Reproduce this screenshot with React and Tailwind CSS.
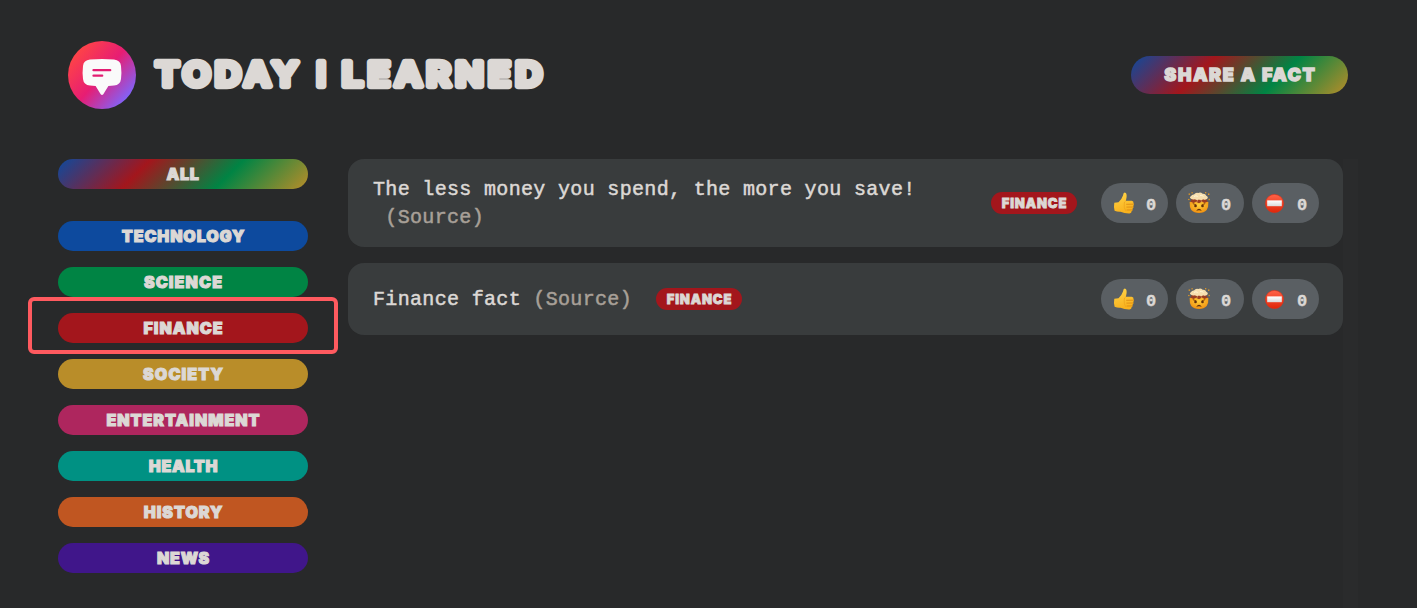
import React from "react";

const DISPLAY =
  "font-['Inter'] font-black uppercase whitespace-nowrap text-[#dcd8d5] [-webkit-text-stroke-color:#dcd8d5]";

const categories = [
  { name: "technology", color: "bg-[#0d4a9e]", spacing: "tracking-[0.9px]" },
  { name: "science", color: "bg-[#008444]", spacing: "tracking-[1.15px]" },
  { name: "finance", color: "bg-[#a3161c]", spacing: "tracking-[1px]" },
  { name: "society", color: "bg-[#b98d29]", spacing: "tracking-[1.15px]" },
  { name: "entertainment", color: "bg-[#ae265e]", spacing: "tracking-[1px]" },
  { name: "health", color: "bg-[#009183]", spacing: "tracking-[0.7px]" },
  { name: "history", color: "bg-[#c05621]", spacing: "tracking-[1px]" },
  { name: "news", color: "bg-[#40168a]", spacing: "tracking-[0.8px]" },
];

const GRADIENT = "bg-[linear-gradient(135deg,#0d4a9e,#a3161c,#008444,#b98d29)]";

function Logo() {
  return (
    <svg width="68" height="68" viewBox="0 0 68 68" className="shrink-0">
      <defs>
        <linearGradient id="logo" x1="0.1" y1="0.15" x2="0.9" y2="0.85">
          <stop offset="0" stopColor="#ff4545" />
          <stop offset="0.5" stopColor="#e71d73" />
          <stop offset="1" stopColor="#7d66ff" />
        </linearGradient>
      </defs>
      <circle cx="34" cy="34" r="34" fill="url(#logo)" />
      <path
        d="M22 18.6Q34 17.4 46 18.6Q52.4 19.2 53 25Q53.8 31.500 53 38Q52.400 43.800 46 44.600L40.400 45L35.300 53.200Q34 54.800 32.700 53.200L27.600 45L22 44.600Q15.600 43.800 15 38Q14.200 31.500 15 25Q15.600 19.200 22 18.600Z"
        fill="#fafafa"
      />
      <path d="M25.500 29.200H42.200M25.500 34.700H34.200" stroke="#e31c72" strokeWidth="2.300" strokeLinecap="round" />
    </svg>
  );
}

function Wordmark() {
  return (
    <svg
      width="400"
      height="46"
      viewBox="0 0 400 46"
      className="ml-[13px] font-['Inter'] text-[33px] font-semibold"
      fill="#dcd8d5"
      stroke="#dcd8d5"
      strokeWidth="6.4"
      strokeLinejoin="round"
    >
      <text x="6.500" y="33.700" textLength="147" lengthAdjust="spacingAndGlyphs" letterSpacing="4.2">TODAY</text>
      <text x="167.500" y="33.700">I</text>
      <text x="193" y="33.700" textLength="205" lengthAdjust="spacingAndGlyphs" letterSpacing="4.4">LEARNED</text>
    </svg>
  );
}

function ThumbsUp() {
  return (
    <svg width="22" height="22" viewBox="0 0 22 22">
      <defs>
        <linearGradient id="thumb" x1="0" y1="0" x2="0.3" y2="1">
          <stop offset="0" stopColor="#ffd54a" />
          <stop offset="1" stopColor="#f9b21d" />
        </linearGradient>
      </defs>
      <path
        d="M1.300 10.800Q3.500 10.200 5.500 10.200Q8.800 7.500 10 3.600Q10.300 .6 11.800 .6Q14 1 13.600 5L12.900 8.700H18.600Q20.900 8.900 20.500 11Q21.400 12.500 20.300 13.900Q20.800 15.800 19.500 16.800Q19.900 18.500 18.600 19.300Q18.700 21.300 16.500 21.400Q11.500 21.500 7.500 19.700Q4.500 20 1.600 18.700Q.5 14.800 1.300 10.800Z"
        fill="url(#thumb)"
      />
      <path d="M13.600 12.300L20.400 12.200M13.800 15.100L20 15M14 18L19.300 17.900" stroke="#d98711" strokeWidth=".8" strokeLinecap="round" fill="none" />
      <path d="M12.800 8.800Q11 9.600 11.200 12Q10.800 15.500 12.600 18.800" stroke="#e9a01b" strokeWidth=".7" fill="none" />
    </svg>
  );
}

function MindBlown() {
  return (
    <svg width="22" height="22" viewBox="0 0 22 22">
      <defs>
        <radialGradient id="face" cx=".5" cy=".35" r=".7">
          <stop offset="0" stopColor="#ffcf3a" />
          <stop offset="1" stopColor="#f08a0c" />
        </radialGradient>
      </defs>
      <path d="M1.600 10Q1.400 15 3.300 18Q6 21 11 21Q16 21 18.700 18Q20.600 15 20.400 10Q11 7.500 1.600 10Z" fill="url(#face)" />
      <path d="M2.300 9.600L4.500 6.300L17.500 6.300L19.700 9.600L16.500 11L14 9.500L11 11.300L8 9.700L5.500 11Z" fill="#9b3e22" />
      <path
        d="M3 6.800Q.9 5.300 3.100 3.900Q3.800 2.200 6 2.400Q7.700 .2 10.300 1Q12.600 -.1 14.600 1.700Q17.700 1.500 18.300 3.800Q21 5.300 18.900 7Q17 8.300 15.200 7.200Q12.900 8.800 11 7.400Q8.700 8.700 6.900 7.200Q4.800 8.200 3 6.800Z"
        fill="#f7dfae"
      />
      <path d="M6 4.500Q8 3 9.700 4.500M12 3.500Q14 2.700 15.500 4.500" stroke="#fff4d5" strokeWidth="1" fill="none" />
      <path d="M9.600 7.800L8.900 9.900M12.900 7.700L13.500 9.800" stroke="#dca06a" strokeWidth=".8" />
      <g fill="#e89b22">
        <rect x=".6" y="1.500" width="1.500" height="1.300" />
        <rect x="3.500" y=".2" width="1.200" height="1.200" />
        <rect x="17" y=".1" width="1.300" height="1.200" />
        <rect x="20" y="1.500" width="1.400" height="1.400" />
        <rect x=".2" y="6.900" width="1.300" height="1.200" />
        <rect x="20.600" y="6.800" width="1.200" height="1.400" />
      </g>
      <path d="M4.800 11.600L8.500 13M17.200 11.600L13.500 13" stroke="#8b4709" strokeWidth="1" />
      <circle cx="7.500" cy="14" r="1.300" fill="#62300c" />
      <circle cx="14.500" cy="14" r="1.300" fill="#62300c" />
      <path d="M8.200 18.700Q11 14.900 13.800 18.700Q11 18 8.200 18.700Z" fill="#62300c" />
    </svg>
  );
}

function NoEntry() {
  return (
    <svg width="22" height="22" viewBox="0 0 22 22">
      <defs>
        <linearGradient id="stop" x1="0" y1="0" x2="0" y2="1">
          <stop offset="0" stopColor="#ff6348" />
          <stop offset="1" stopColor="#df2508" />
        </linearGradient>
        <linearGradient id="bar" x1="0" y1="0" x2="0" y2="1">
          <stop offset="0" stopColor="#ffffff" />
          <stop offset="1" stopColor="#d9d9d9" />
        </linearGradient>
      </defs>
      <circle cx="10.500" cy="11.500" r="9.100" fill="url(#stop)" stroke="#e52b10" strokeWidth=".6" />
      <rect x="3.200" y="8.400" width="14.600" height="5.800" fill="url(#bar)" />
    </svg>
  );
}

const votes = [
  { Icon: ThumbsUp, width: "w-[67px]" },
  { Icon: MindBlown, width: "w-[68px]" },
  { Icon: NoEntry, width: "w-[67px]" },
];

function Votes() {
  return (
    <div className="flex shrink-0 gap-2">
      {votes.map(({ Icon, width }, i) => (
        <button key={i} className={`${width} flex h-10 items-center rounded-full bg-[#5a5f63] pl-3`}>
          <Icon />
          <span className="ml-[11px] pt-1 font-['Liberation_Mono',monospace] text-[17px] leading-none font-bold text-[#dcd8d5] [-webkit-text-stroke:0.4px_#dcd8d5]">
            0
          </span>
        </button>
      ))}
    </div>
  );
}

function Tag() {
  return (
    <span
      className={`${DISPLAY} flex h-[22px] w-[86px] shrink-0 items-center justify-center rounded-full bg-[#a3161c] pl-px text-[13px] leading-none tracking-[0.9px] [-webkit-text-stroke-width:0.8px]`}
    >
      Finance
    </span>
  );
}

function Source() {
  return <a className="text-[#a8a098] [-webkit-text-stroke-color:#a8a098]">(Source)</a>;
}

const FACT =
  "font-['Liberation_Mono',monospace] text-[20px] leading-7 tracking-[0.33px] text-[#dcd8d5] [-webkit-text-stroke:0.5px_#dcd8d5]";

export default function App() {
  return (
    <div className="relative h-[608px] w-[1417px] overflow-hidden bg-[#28292a] antialiased">
      <header className="flex h-[159px] items-start justify-between pt-[41px] pr-[69px] pl-[68px]">
        <div className="flex h-[68px] items-center">
          <Logo />
          <h1>
            <Wordmark />
          </h1>
        </div>
        <button
          className={`${DISPLAY} ${GRADIENT} mt-[15px] flex h-[38px] w-[217px] items-center justify-center rounded-full pb-px pl-0.5 text-[18px] leading-none tracking-[1.65px] [-webkit-text-stroke-width:1.4px]`}
        >
          Share a fact
        </button>
      </header>

      <main className="flex h-[449px] pl-[58px]">
        <aside className="w-[250px] shrink-0">
          <button
            className={`${DISPLAY} ${GRADIENT} mb-8 flex h-[30px] w-full items-center justify-center rounded-full text-[16px] leading-none tracking-[0.7px] [-webkit-text-stroke-width:1.1px]`}
          >
            All
          </button>
          <ul className="flex flex-col gap-4">
            {categories.map((c) => (
              <li key={c.name}>
                <button
                  className={`${DISPLAY} ${c.color} ${c.spacing} flex h-[30px] w-full items-center justify-center rounded-full pl-px text-[16px] leading-none [-webkit-text-stroke-width:1.1px]`}
                >
                  {c.name}
                </button>
              </li>
            ))}
          </ul>
        </aside>

        <section className="ml-10 flex w-[995px] flex-col gap-4">
          <article className="flex h-[88px] items-center rounded-2xl bg-[#393c3d] px-6">
            <p className={`${FACT} w-[619px] shrink-0 pt-px pl-px whitespace-pre`}>
              The less money you spend, the more you save!{"\n "}
              <Source />
            </p>
            <Tag />
            <div className="ml-auto">
              <Votes />
            </div>
          </article>
          <article className="flex h-[72px] items-center rounded-2xl bg-[#393c3d] px-6">
            <p className={`${FACT} w-[284px] shrink-0 pt-px pl-px whitespace-pre`}>
              Finance fact <Source />
            </p>
            <Tag />
            <div className="ml-auto">
              <Votes />
            </div>
          </article>
        </section>
        <div className="w-[15px] bg-[#2a2b2c]" />
      </main>

      <div className="absolute top-[297px] left-[28px] h-[57px] w-[310px] rounded-md border-4 border-[#ff5a5f]" />
    </div>
  );
}
